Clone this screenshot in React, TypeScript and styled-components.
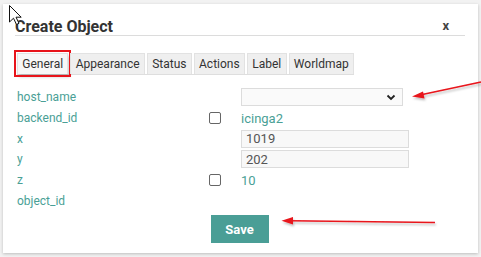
import styled, { createGlobalStyle } from 'styled-components';

const GlobalStyle = createGlobalStyle`
  html, body {
    margin: 0;
    padding: 0;
    background: #f2f2f2;
    font-family: Roboto, "Liberation Sans", Arial, sans-serif;
  }
`;

interface Field {
  name: string;
  check?: boolean;
  kind?: 'select' | 'input' | 'text';
  value?: string;
}

const fields: Field[] = [
  { name: 'host_name', kind: 'select' },
  { name: 'backend_id', check: true, kind: 'text', value: 'icinga2' },
  { name: 'x', kind: 'input', value: '1019' },
  { name: 'y', kind: 'input', value: '202' },
  { name: 'z', check: true, kind: 'text', value: '10' },
  { name: 'object_id' },
];

const tabs = ['General', 'Appearance', 'Status', 'Actions', 'Label', 'Worldmap'];

const App = () => {
  return (
    <Page>
      <GlobalStyle />
      <Dialog>
        <Header>
          <Title>Create Object</Title>
          <Close>x</Close>
        </Header>
        <TabList>
          {tabs.map((t, i) => (
            <Tab key={t} active={i === 0}>
              {t}
            </Tab>
          ))}
        </TabList>
        <Form>
          {fields.map((f) => (
            <Row key={f.name}>
              <Label>{f.name}</Label>
              <CheckCell>{f.check && <Check />}</CheckCell>
              <ValueCell>
                {f.kind === 'select' && (
                  <Select>
                    <svg width="10" height="7" viewBox="0 0 10 7">
                      <path d="M1.5 1.5 L5 5 L8.5 1.5" fill="none" stroke="#222" strokeWidth="1.8" />
                    </svg>
                  </Select>
                )}
                {f.kind === 'input' && <Input defaultValue={f.value} />}
                {f.kind === 'text' && <Value>{f.value}</Value>}
              </ValueCell>
            </Row>
          ))}
        </Form>
        <Footer>
          <SaveButton>Save</SaveButton>
        </Footer>
      </Dialog>

      <Overlay width="481" height="257" viewBox="0 0 481 257">
        <defs>
          <filter id="sh" x="-10%" y="-50%" width="120%" height="300%">
            <feDropShadow dx="1" dy="2" stdDeviation="1" floodColor="#000" floodOpacity="0.25" />
          </filter>
        </defs>
        <g filter="url(#sh)">
          <line x1="481" y1="82" x2="420" y2="95" stroke="#e8141b" strokeWidth="1.6" />
          <polygon points="412,96.5 423,91.5 424.5,98.5" fill="#e8141b" />
          <line x1="435" y1="222.5" x2="290" y2="220.8" stroke="#e8141b" strokeWidth="1.6" />
          <polygon points="281.5,220.7 293,217 293,224.5" fill="#e8141b" />
        </g>
        <path
          d="M9.5 5.5 L9.5 22 L13.5 18.2 L16.5 24.5 L19 23.3 L16 17.2 L21.2 17.2 Z"
          fill="#fff"
          stroke="#111"
          strokeWidth="1"
          strokeLinejoin="round"
        />
      </Overlay>
    </Page>
  );
};

export default App;

const Page = styled.div`
  position: relative;
  width: 481px;
  height: 257px;
  overflow: hidden;
  padding: 4px 0 0 3px;
  box-sizing: border-box;
`;

const Dialog = styled.div`
  width: 475px;
  height: 249px;
  background: #fff;
  box-shadow: 0 1px 3px rgba(0, 0, 0, 0.22);
  padding: 0 13px 0 12px;
  box-sizing: border-box;
  display: flex;
  flex-direction: column;
`;

const Header = styled.div`
  display: flex;
  justify-content: space-between;
  align-items: flex-end;
  height: 32px;
  padding: 0 16px 0 0;
  box-sizing: border-box;
  border-bottom: 1px solid #dcdcdc;
`;

const Title = styled.h3`
  margin: 0;
  font-size: 16px;
  line-height: 16px;
  font-weight: 700;
  color: #333;
`;

const Close = styled.span`
  font-size: 13px;
  line-height: 16px;
  font-weight: 700;
  color: #444;
  margin-bottom: 1px;
`;

const TabList = styled.div`
  display: flex;
  gap: 2px;
  margin: 17px 0 0 2px;
  align-self: flex-start;
  border-bottom: 1px solid #dedede;
`;

const Tab = styled.div<{ active?: boolean }>`
  height: 21px;
  line-height: 21px;
  padding: 0 4.3px;
  font-size: 12px;
  color: #333;
  background: ${(p) => (p.active ? '#f7f7f7' : '#efefef')};
  border: 1px solid #e2e2e2;
  border-bottom: none;
  box-sizing: border-box;
  outline: ${(p) => (p.active ? '2px solid #e8141b' : 'none')};
  outline-offset: 1px;
  box-shadow: ${(p) => (p.active ? '2px 3px 3px rgba(0,0,0,0.2)' : 'none')};
`;

const Form = styled.div`
  display: grid;
  grid-auto-rows: 20.7px;
  margin: 12px 0 0 2px;
`;

const Row = styled.div`
  display: grid;
  grid-template-columns: 192px 32px 1fr;
  align-items: center;
`;

const Label = styled.span`
  font-size: 12px;
  color: #4a9f96;
`;

const CheckCell = styled.div`
  display: flex;
  align-items: center;
`;

const Check = styled.span`
  width: 12px;
  height: 12px;
  border: 1.3px solid #666;
  border-radius: 2px;
  box-sizing: border-box;
  display: block;
`;

const ValueCell = styled.div`
  display: flex;
  align-items: center;
`;

const Select = styled.div`
  width: 162px;
  height: 18px;
  background: #fafafa;
  border: 1px solid #dcdcdc;
  box-sizing: border-box;
  display: flex;
  align-items: center;
  justify-content: flex-end;
  padding-right: 6px;
`;

const Input = styled.input`
  width: 168px;
  height: 18px;
  background: #f8f8f8;
  border: 1px solid #dcdcdc;
  box-sizing: border-box;
  padding: 0 4px;
  font-family: Roboto, "Liberation Sans", Arial, sans-serif;
  font-size: 13px;
  color: #555;
  outline: none;
`;

const Value = styled.span`
  font-size: 13px;
  color: #4a9f96;
`;

const Footer = styled.div`
  display: flex;
  justify-content: center;
  margin-top: 4px;
  padding-right: 1px;
`;

const SaveButton = styled.button`
  width: 58px;
  height: 28px;
  border: none;
  background: #4a9e96;
  color: #fff;
  font-family: Roboto, "Liberation Sans", Arial, sans-serif;
  font-size: 13px;
  font-weight: 700;
  cursor: pointer;
`;

const Overlay = styled.svg`
  position: absolute;
  left: 0;
  top: 0;
  pointer-events: none;
`;
